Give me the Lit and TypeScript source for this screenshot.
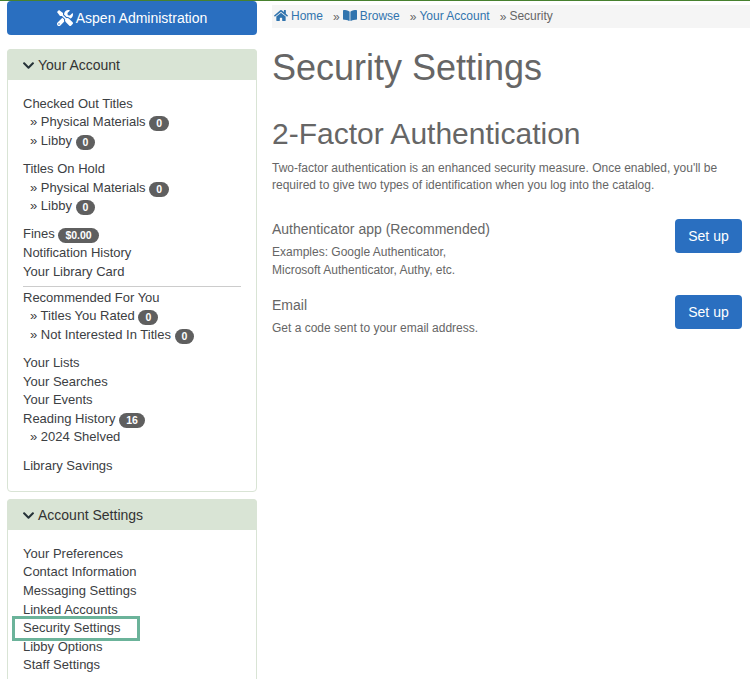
import { LitElement, html, css, svg } from "lit";
import { customElement } from "lit/decorators.js";

const chevron = svg`<path d="M207.029 381.476L12.686 187.132c-9.373-9.373-9.373-24.569 0-33.941l22.667-22.667c9.357-9.357 24.522-9.375 33.901-.04L224 284.505l154.745-154.021c9.379-9.335 24.544-9.317 33.901.04l22.667 22.667c9.373 9.373 9.373 24.569 0 33.941L240.971 381.476c-9.373 9.372-24.569 9.372-33.942 0z"/>`;
const home = svg`<path d="M280.37 148.26L96 300.11V464a16 16 0 0 0 16 16l112.06-.29a16 16 0 0 0 15.92-16V368a16 16 0 0 1 16-16h64a16 16 0 0 1 16 16v95.64a16 16 0 0 0 16 16.05L464 480a16 16 0 0 0 16-16V300L295.67 148.26a12.19 12.19 0 0 0-15.3 0zM571.6 251.47L488 182.56V44.05a12 12 0 0 0-12-12h-56a12 12 0 0 0-12 12v72.61L318.47 43a48 48 0 0 0-61 0L4.34 251.47a12 12 0 0 0-1.6 16.9l25.5 31A12 12 0 0 0 45.15 301l235.22-193.74a12.19 12.19 0 0 1 15.3 0L530.9 301a12 12 0 0 0 16.9-1.6l25.5-31a12 12 0 0 0-1.7-16.93z"/>`;
const book = svg`<path d="M542.22 32.05c-54.8 3.11-163.72 14.43-230.96 55.59-4.64 2.84-7.27 7.89-7.27 13.17v363.87c0 11.55 12.63 18.85 23.28 13.49 69.18-34.82 169.23-44.32 218.7-46.92 16.89-.89 30.02-14.43 30.02-30.66V62.75c.01-17.71-15.35-31.74-33.77-30.7zM264.73 87.64C197.5 46.48 88.58 35.17 33.78 32.05 15.36 31.01 0 45.04 0 62.75V400.6c0 16.24 13.13 29.78 30.02 30.67 49.49 2.6 149.59 12.11 218.77 46.95 10.62 5.35 23.21-1.94 23.21-13.46V100.63c0-5.29-2.62-10.14-7.27-12.99z"/>`;
const tools = svg`<path d="M501.1 395.7L384 278.6c-23.1-23.1-57.6-27.6-85.4-13.9L192 158.1V96L64 0 0 64l96 128h62.1l106.6 106.6c-13.6 27.8-9.2 62.3 13.9 85.4l117.1 117.1c14.6 14.6 38.2 14.6 52.7 0l52.7-52.7c14.5-14.6 14.5-38.2 0-52.7zM331.7 225c28.3 0 54.9 11 74.9 31l19.4 19.4c15.8-6.9 30.8-16.5 43.8-29.5 37.1-37.1 49.7-89.3 37.9-136.7-2.2-9-13.5-12.1-20.1-5.5l-74.4 74.4-67.9-11.3L334 98.9l74.4-74.4c6.6-6.6 3.4-17.9-5.7-20.2-47.4-11.7-99.6.9-136.6 37.9-28.5 28.5-41.9 66.1-41.2 103.6l82.1 82.1c8.1-1.9 16.5-2.9 24.7-2.9zm-103.9 82l-56.7-56.7L18.7 402.8c-25 25-25 65.5 0 90.5s65.5 25 90.5 0l123.6-123.6c-7.6-19.9-9.9-41.6-5-62.7zM64 472c-13.2 0-24-10.8-24-24 0-13.3 10.7-24 24-24s24 10.7 24 24c0 13.2-10.7 24-24 24z"/>`;

type Row = { t: string; sub?: boolean; badge?: string; focus?: boolean };

const account: Row[][] = [
  [
    { t: "Checked Out Titles" },
    { t: "Physical Materials", sub: true, badge: "0" },
    { t: "Libby", sub: true, badge: "0" },
  ],
  [
    { t: "Titles On Hold" },
    { t: "Physical Materials", sub: true, badge: "0" },
    { t: "Libby", sub: true, badge: "0" },
  ],
  [
    { t: "Fines", badge: "$0.00" },
    { t: "Notification History" },
    { t: "Your Library Card" },
  ],
];

const recommended: Row[][] = [
  [
    { t: "Recommended For You" },
    { t: "Titles You Rated", sub: true, badge: "0" },
    { t: "Not Interested In Titles", sub: true, badge: "0" },
  ],
  [
    { t: "Your Lists" },
    { t: "Your Searches" },
    { t: "Your Events" },
    { t: "Reading History", badge: "16" },
    { t: "2024 Shelved", sub: true },
  ],
  [{ t: "Library Savings" }],
];

const settings: Row[][] = [
  [
    { t: "Your Preferences" },
    { t: "Contact Information" },
    { t: "Messaging Settings" },
    { t: "Linked Accounts" },
    { t: "Security Settings", focus: true },
    { t: "Libby Options" },
    { t: "Staff Settings" },
  ],
];

@customElement("app-root")
export class AppRoot extends LitElement {
  static styles = css`
    :host {
      display: block;
      height: 679px;
      overflow: hidden;
      border-top: 1px solid #47812f;
      box-sizing: border-box;
      font-family: "Liberation Sans", Arial, sans-serif;
      color: #666;
      background: #fff;
    }
    .page {
      display: grid;
      grid-template-columns: 250px 1fr;
      column-gap: 15px;
      padding-left: 7px;
    }
    .admin {
      height: 34px;
      background: #2a6fc0;
      border-radius: 4px;
      color: #fff;
      font-size: 14px;
      display: flex;
      align-items: center;
      justify-content: center;
      gap: 3px;
      margin-bottom: 14px;
    }
    .admin svg {
      width: 16px;
      height: 16px;
      fill: #fff;
    }
    .panel {
      border: 1px solid #d9e4d5;
      border-radius: 4px;
      margin-bottom: 7.5px;
    }
    .panel-head {
      height: 31px;
      box-sizing: border-box;
      margin: -1px -1px 0;
      border-radius: 4px 4px 0 0;
      background: #d9e4d5;
      color: #333;
      font-size: 14px;
      display: flex;
      align-items: center;
      padding: 1px 0 0 15px;
      gap: 3px;
    }
    .panel-head svg {
      width: 13px;
      height: 13px;
      fill: #263238;
    }
    .panel-body {
      padding: 14.5px 15px 15.5px;
    }
    .group {
      margin-bottom: 9.8px;
    }
    .group:last-child {
      margin-bottom: 0;
    }
    .row {
      font-size: 13px;
      line-height: 18.57px;
      height: 18.57px;
      color: #3c4043;
      white-space: nowrap;
    }
    .row.sub {
      padding-left: 7px;
    }
    .badge {
      display: inline-block;
      background: #5f5f5f;
      color: #fff;
      font-size: 10.5px;
      font-weight: bold;
      line-height: 15px;
      padding: 0 7px;
      border-radius: 8px;
      vertical-align: -1px;
    }
    .focus {
      display: inline-block;
      position: relative;
    }
    .focus::after {
      content: "";
      position: absolute;
      left: -11px;
      right: -19px;
      top: -3px;
      bottom: -3px;
      border: 3px solid #6bb39a;
    }
    hr {
      border: 0;
      border-top: 1px solid #ccc;
      margin: 4.5px 0 2px;
    }
    main {
      padding-top: 4px;
      min-width: 0;
    }
    .crumbs {
      height: 23px;
      box-sizing: border-box;
      padding: 0 0 2px 2px;
      background: #f5f5f5;
      display: flex;
      align-items: center;
      gap: 10px;
      font-size: 12px;
      color: #3174ae;
    }
    .crumbs span {
      display: inline-flex;
      align-items: center;
      gap: 3px;
    }
    .crumbs svg {
      width: 14px;
      height: 13px;
      fill: #3174ae;
    }
    .crumbs .sep {
      color: #666;
      margin-right: -7px;
      position: relative;
      top: 1px;
    }
    .crumbs .cur {
      color: #666;
    }
    h1 {
      font-size: 36px;
      font-weight: normal;
      line-height: 40px;
      margin: 20px 0 0;
    }
    h2 {
      font-size: 30px;
      font-weight: normal;
      line-height: 33px;
      margin: 29px 0 0;
    }
    p {
      font-size: 12px;
      line-height: 17px;
      margin: 0;
    }
    .intro {
      margin-top: 10px;
      padding-right: 30px;
    }
    .method {
      display: flex;
      justify-content: space-between;
      align-items: flex-start;
      margin-right: 8px;
    }
    .method h3 {
      font-size: 14px;
      font-weight: normal;
      line-height: 20px;
      margin: 0 0 4px;
    }
    .first {
      margin-top: 25px;
    }
    .first p {
      line-height: 18px;
    }
    .second {
      margin-top: 16px;
    }
    .second h3 {
      margin-bottom: 5px;
    }
    button {
      width: 67px;
      height: 34px;
      border: 0;
      border-radius: 4px;
      background: #2a6fc0;
      color: #fff;
      font: 14px "Liberation Sans", Arial, sans-serif;
      padding: 0;
    }
  `;

  private renderRow(r: Row) {
    const label = r.focus ? html`<span class="focus">${r.t}</span>` : r.t;
    return html`<div class="row ${r.sub ? "sub" : ""}">
      ${r.sub ? "» " : ""}${label}
      ${r.badge ? html`<span class="badge">${r.badge}</span>` : ""}
    </div>`;
  }

  private renderGroups(groups: Row[][]) {
    return html`<div>
      ${groups.map(
        (g) => html`<div class="group">${g.map((r) => this.renderRow(r))}</div>`
      )}
    </div>`;
  }

  render() {
    return html`
      <div class="page">
        <aside>
          <div class="admin">
            <svg viewBox="0 0 512 512">${tools}</svg>
            Aspen Administration
          </div>
          <div class="panel">
            <div class="panel-head">
              <svg viewBox="0 0 448 512">${chevron}</svg>Your Account
            </div>
            <div class="panel-body">
              ${this.renderGroups(account)}
              <hr />
              ${this.renderGroups(recommended)}
            </div>
          </div>
          <div class="panel">
            <div class="panel-head">
              <svg viewBox="0 0 448 512">${chevron}</svg>Account Settings
            </div>
            <div class="panel-body">${this.renderGroups(settings)}</div>
          </div>
        </aside>
        <main>
          <nav class="crumbs">
            <span><svg viewBox="0 0 576 512">${home}</svg>Home</span>
            <span class="sep">»</span>
            <span><svg viewBox="0 0 576 512">${book}</svg>Browse</span>
            <span class="sep">»</span>
            <span>Your Account</span>
            <span class="sep">»</span>
            <span class="cur">Security</span>
          </nav>
          <h1>Security Settings</h1>
          <h2>2-Factor Authentication</h2>
          <p class="intro">
            Two-factor authentication is an enhanced security measure. Once
            enabled, you'll be required to give two types of identification when
            you log into the catalog.
          </p>
          <div class="method first">
            <div>
              <h3>Authenticator app (Recommended)</h3>
              <p>Examples: Google Authenticator,<br />Microsoft Authenticator, Authy, etc.</p>
            </div>
            <button>Set up</button>
          </div>
          <div class="method second">
            <div>
              <h3>Email</h3>
              <p>Get a code sent to your email address.</p>
            </div>
            <button>Set up</button>
          </div>
        </main>
      </div>
    `;
  }
}

declare global {
  interface HTMLElementTagNameMap {
    "app-root": AppRoot;
  }
}
